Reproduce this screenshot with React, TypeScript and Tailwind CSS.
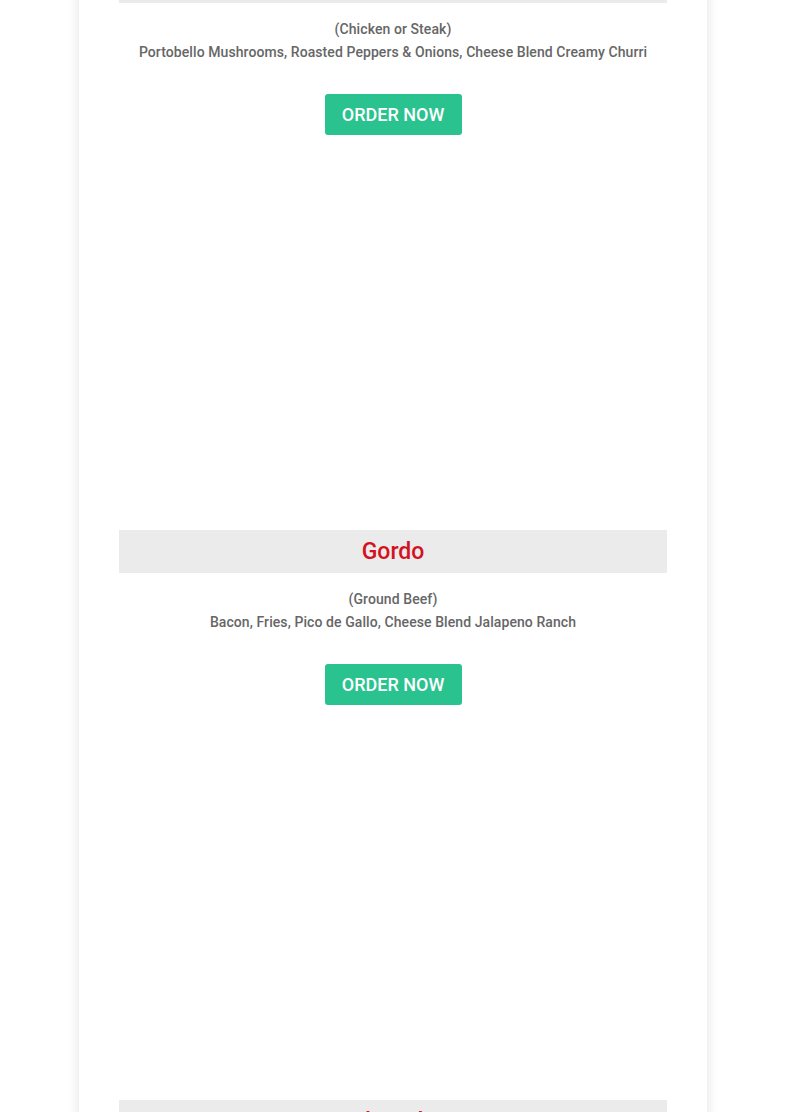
const items = [
  {
    name: 'Fajita',
    protein: '(Chicken or Steak)',
    toppings: 'Portobello Mushrooms, Roasted Peppers & Onions, Cheese Blend Creamy Churri',
  },
  {
    name: 'Gordo',
    protein: '(Ground Beef)',
    toppings: 'Bacon, Fries, Pico de Gallo, Cheese Blend Jalapeno Ranch',
  },
  {
    name: 'Chipotle',
    protein: '(Chicken)',
    toppings: 'Chipotle Sauce, Lettuce, Pico de Gallo, Cheese Blend',
  },
];

function MenuItem({ item }: { item: (typeof items)[number] }) {
  return (
    <div className="flex flex-col">
      <div className="h-[43px] bg-[#ebebeb] flex items-center justify-center">
        <h2 className="text-[23px] font-medium text-[#d3121f] leading-none">{item.name}</h2>
      </div>
      <div className="mt-[15px] text-center text-[14px] tracking-[0.08px] leading-[23px] font-medium text-[#666]">
        <p>{item.protein}</p>
        <p>{item.toppings}</p>
      </div>
      <div className="mt-[30px] flex justify-center">
        <a
          href="#"
          className="h-[41px] w-[137px] rounded-[3px] bg-[#2ac390] flex items-center justify-center text-[18px] font-medium text-white uppercase"
        >
          Order Now
        </a>
      </div>
      {/* space for embedded menu image */}
      <div className="h-[395px]" />
    </div>
  );
}

export default function App() {
  return (
    <div className="min-h-screen bg-white overflow-hidden" style={{ fontFamily: 'Roboto, "Liberation Sans", sans-serif' }}>
      <div className="w-[628px] ml-[79px] -mt-[40px] bg-white shadow-[0_0_12px_rgba(0,0,0,0.12)] px-[40px]">
        {items.map((item) => (
          <MenuItem key={item.name} item={item} />
        ))}
      </div>
    </div>
  );
}
